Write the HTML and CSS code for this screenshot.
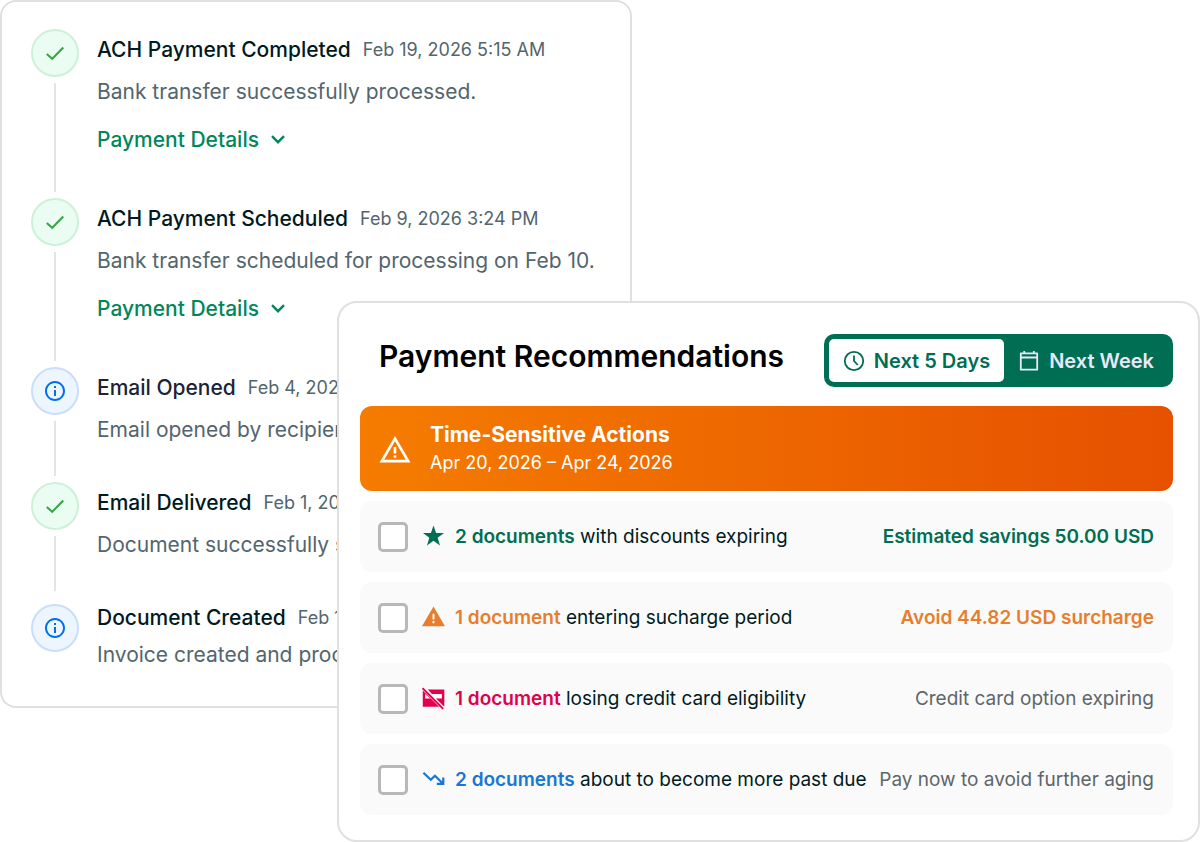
FILE: index.html
```
<!DOCTYPE html>
<html lang="en">

<head>
    <meta charset="utf-8">
    <title>Payment Recommendations</title>
    <link rel="stylesheet" href="styles.css">
</head>

<body>
    <!-- shared icon shapes -->
    <svg class="sprite" aria-hidden="true">
        <symbol id="icon-check" viewBox="0 0 24 24">
            <path d="M3 13l6 5.300L21 6" fill="none" stroke="currentColor" stroke-width="2.300" />
        </symbol>
        <symbol id="icon-info" viewBox="0 0 24 24">
            <path d="M11 7h2v2h-2zm0 4h2v6h-2zm1-9C6.480 2 2 6.480 2 12s4.480 10 10 10 10-4.480 10-10S17.520 2 12 2zm0 18c-4.410 0-8-3.590-8-8s3.590-8 8-8 8 3.590 8 8-3.590 8-8 8z" fill="currentColor" />
        </symbol>
        <symbol id="icon-chevron" viewBox="0 0 14 9">
            <path d="M1 1.200l6 6 6-6" fill="none" stroke="currentColor" stroke-width="2.400" />
        </symbol>
    </svg>

    <main class="stage">
        <section class="card timeline">
            <ol class="events">
                <li class="event">
                    <div class="marker">
                        <span class="dot dot-done"><svg><use href="#icon-check" /></svg></span>
                    </div>
                    <div class="event-body">
                        <div class="event-head">
                            <h3>ACH Payment Completed</h3>
                            <time>Feb 19, 2026 5:15 AM</time>
                        </div>
                        <p>Bank transfer successfully processed.</p>
                        <button class="details">Payment Details <svg><use href="#icon-chevron" /></svg></button>
                    </div>
                </li>
                <li class="event">
                    <div class="marker">
                        <span class="dot dot-done"><svg><use href="#icon-check" /></svg></span>
                    </div>
                    <div class="event-body">
                        <div class="event-head">
                            <h3>ACH Payment Scheduled</h3>
                            <time>Feb 9, 2026 3:24 PM</time>
                        </div>
                        <p>Bank transfer scheduled for processing on Feb 10.</p>
                        <button class="details">Payment Details <svg><use href="#icon-chevron" /></svg></button>
                    </div>
                </li>
                <li class="event">
                    <div class="marker">
                        <span class="dot dot-info"><svg><use href="#icon-info" /></svg></span>
                    </div>
                    <div class="event-body">
                        <div class="event-head">
                            <h3 class="opened">Email Opened</h3>
                            <time>Feb 4, 2026</time>
                        </div>
                        <p>Email opened by recipient.</p>
                    </div>
                </li>
                <li class="event">
                    <div class="marker">
                        <span class="dot dot-done"><svg><use href="#icon-check" /></svg></span>
                    </div>
                    <div class="event-body">
                        <div class="event-head">
                            <h3>Email Delivered</h3>
                            <time>Feb 1, 2026</time>
                        </div>
                        <p>Document successfully sent.</p>
                    </div>
                </li>
                <li class="event event-last">
                    <div class="marker">
                        <span class="dot dot-info"><svg><use href="#icon-info" /></svg></span>
                    </div>
                    <div class="event-body">
                        <div class="event-head">
                            <h3>Document Created</h3>
                            <time>Feb 1, 2026</time>
                        </div>
                        <p>Invoice created and processed.</p>
                    </div>
                </li>
            </ol>
        </section>

        <section class="card recommendations">
            <header class="rec-header">
                <h2>Payment Recommendations</h2>
                <div class="toggle">
                    <button class="toggle-btn active">
                        <svg viewBox="0 0 22 22">
                            <circle cx="11" cy="11" r="9.200" fill="none" stroke="currentColor" stroke-width="1.800" />
                            <path d="M11 5.500V11l3.800 4" fill="none" stroke="currentColor" stroke-width="1.800" />
                        </svg>
                        Next 5 Days
                    </button>
                    <button class="toggle-btn">
                        <svg viewBox="0 0 22 22">
                            <path d="M2.800 3.300h16.400v16.400H2.800zM2.800 7.500h16.400M6.200 1v3M15.800 1v3" fill="none" stroke="currentColor" stroke-width="1.800" stroke-linejoin="round" />
                        </svg>
                        Next Week
                    </button>
                </div>
            </header>

            <div class="banner">
                <svg viewBox="0 0 32 28">
                    <path d="M16 1L31.500 27.500H.5zM16 6.200L5.200 24.700h21.600z" fill="currentColor" fill-rule="evenodd" />
                    <path d="M14.700 12h2.600v6.500h-2.600zM14.700 20.200h2.600v2.600h-2.600z" fill="currentColor" />
                </svg>
                <div>
                    <h3>Time-Sensitive Actions</h3>
                    <p>Apr 20, 2026 – Apr 24, 2026</p>
                </div>
            </div>

            <ul class="rows">
                <li class="row green">
                    <input type="checkbox" id="rec-discounts">
                    <svg viewBox="0 0 24 24">
                        <path d="M12 .5l2.700 7.900h8.300L16.300 13.300l2.500 8L12 16.500l-6.800 4.800 2.500-8L1 8.400h8.300z" fill="currentColor" />
                    </svg>
                    <label for="rec-discounts"><b>2 documents</b> with discounts expiring</label>
                    <span class="result strong">Estimated savings 50.00 USD</span>
                </li>
                <li class="row orange">
                    <input type="checkbox" id="rec-surcharge">
                    <svg viewBox="0 0 24 24">
                        <path d="M12 .5L24 21H0zM11 8.200v5.800h2V8.200zM11 15.700v2.200h2v-2.200z" fill="currentColor" fill-rule="evenodd" />
                    </svg>
                    <label for="rec-surcharge"><b>1 document</b> entering sucharge period</label>
                    <span class="result strong">Avoid 44.82 USD surcharge</span>
                </li>
                <li class="row red">
                    <input type="checkbox" id="rec-card">
                    <svg viewBox="0 0 24 24">
                        <path d="M6 2.500h17.300v18L14.500 12h6.300V7.200H10.400zM.8 3.600L17.800 20.500H.8zM3.300 7.200V12h5.300z" fill="currentColor" fill-rule="evenodd" />
                        <path d="M.5 1.200l21.600 21.600" fill="none" stroke="currentColor" stroke-width="2.100" />
                    </svg>
                    <label for="rec-card"><b>1 document</b> losing credit card eligibility</label>
                    <span class="result">Credit card option expiring</span>
                </li>
                <li class="row blue">
                    <input type="checkbox" id="rec-aging">
                    <svg viewBox="0 0 24 24">
                        <path d="M1.500 5l7.700 7.300 4.300-4.200 8 7.800M15.500 16.600h6.700v-6.600" fill="none" stroke="currentColor" stroke-width="2.300" />
                    </svg>
                    <label for="rec-aging"><b>2 documents</b> about to become more past due</label>
                    <span class="result">Pay now to avoid further aging</span>
                </li>
            </ul>
        </section>
    </main>
</body>

</html>
```
FILE: styles.css
```
* {
    box-sizing: border-box;
}

body {
    margin: 0;
    background-color: white;
    color: #001a21;
    font-family: Inter, "Liberation Sans", sans-serif;
    font-size: 18px;
}

h2,
h3,
p,
ol,
ul {
    margin: 0;
    padding: 0;
    list-style: none;
}

button {
    border: none;
    padding: 0;
    background: none;
    font-family: inherit;
    cursor: pointer;
}

.sprite {
    display: none;
}

/* the two cards share the middle column and overlap there */
.stage {
    display: grid;
    grid-template-columns: minmax(0, 337fr) minmax(0, 295fr) minmax(0, 568fr);
    align-items: start;
}

.card {
    border: 2px solid #e0e0e0;
    background-color: white;
}

.timeline {
    grid-area: 1 / 1 / 2 / 3;
    padding: 27px 28px 35px 29px;
    border-radius: 16px;
    overflow: hidden;
    white-space: nowrap;
}

.event {
    display: flex;
    gap: 18px;
}

.marker {
    display: flex;
    flex-direction: column;
    align-items: center;
}

.marker::after {
    content: "";
    flex: 1;
    width: 2px;
    margin: 6px 0;
    background-color: #e0e5e5;
}

.dot {
    display: flex;
    align-items: center;
    justify-content: center;
    width: 48px;
    height: 48px;
    border: 2px solid;
    border-radius: 50%;
}

.dot svg {
    width: 24px;
    height: 24px;
}

.dot-done {
    background-color: #ebfdf3;
    border-color: #cdf0d8;
    color: #37a745;
}

.dot-done svg {
    width: 22px;
    height: 22px;
}

.dot-info {
    background-color: #edf5ff;
    border-color: #c8defa;
    color: #0070eb;
}

.event-body {
    padding-bottom: 32px;
}

.event-head {
    display: flex;
    align-items: center;
    gap: 12px;
    line-height: 42px;
}

.event-head h3 {
    font-size: 21px;
    font-weight: 500;
}

.event-head .opened {
    color: #1a2338;
}

.event-head time {
    font-size: 18px;
    color: #53656d;
}

.event-body p {
    font-size: 21px;
    line-height: 41px;
    color: #53656d;
}

.details {
    display: flex;
    align-items: center;
    gap: 12px;
    height: 54px;
    font-size: 21px;
    font-weight: 500;
    color: #00875a;
}

.details svg {
    width: 14px;
    height: 9px;
}

.event-last .marker {
    padding-top: 7px;
}

.event-last .marker::after {
    display: none;
}

.event-last .event-body {
    padding-bottom: 0;
}

.event-last p {
    line-height: 32px;
}

.recommendations {
    grid-area: 1 / 2 / 2 / 4;
    margin-top: 301px;
    padding: 31px 25px 25px 21px;
    border-radius: 20px;
}

.rec-header {
    display: flex;
    justify-content: space-between;
    padding-left: 19px;
    margin-bottom: 19px;
}

.rec-header h2 {
    font-size: 30px;
    font-weight: 600;
    line-height: 44px;
    color: black;
}

.toggle {
    display: flex;
    height: 53px;
    padding: 5px;
    border-radius: 10px;
    background-color: #006e52;
}

.toggle-btn {
    display: flex;
    align-items: center;
    gap: 9px;
    padding: 0 14px;
    border-radius: 5px;
    font-size: 20px;
    font-weight: 600;
    color: #e8e8fc;
}

.toggle-btn svg {
    width: 22px;
    height: 22px;
}

.toggle-btn.active {
    background-color: white;
    color: #006e52;
}

.banner {
    display: flex;
    align-items: center;
    gap: 19px;
    height: 85px;
    padding: 0 19px;
    margin-bottom: 10px;
    border-radius: 12px;
    background: linear-gradient(to right, #f57c00, #e65100);
    color: white;
}

.banner svg {
    width: 32px;
    height: 28px;
}

.banner h3 {
    font-size: 21px;
    font-weight: 700;
    line-height: 28px;
}

.banner p {
    font-size: 18px;
    line-height: 28px;
}

.rows {
    display: flex;
    flex-direction: column;
    gap: 10px;
}

.row {
    display: flex;
    align-items: center;
    height: 71px;
    padding: 0 19px 0 18px;
    border-radius: 12px;
    background-color: #fafafa;
    font-size: 19px;
}

.row input {
    appearance: none;
    width: 30px;
    height: 30px;
    margin: 0 14px 0 0;
    border: 3px solid #b8b8b8;
    border-radius: 5px;
    background-color: white;
}

.row svg {
    width: 23px;
    height: 23px;
    margin-right: 10px;
}

.row b {
    font-weight: 600;
}

.row .result {
    margin-left: auto;
    color: #5d666b;
}

.row .strong {
    font-weight: 600;
}

.green svg,
.green b,
.green .strong {
    color: #006e52;
}

.orange svg,
.orange b,
.orange .strong {
    color: #e67e2e;
}

.red svg,
.red b {
    color: #e0004d;
}

.blue svg,
.blue b {
    color: #1976d2;
}
```
